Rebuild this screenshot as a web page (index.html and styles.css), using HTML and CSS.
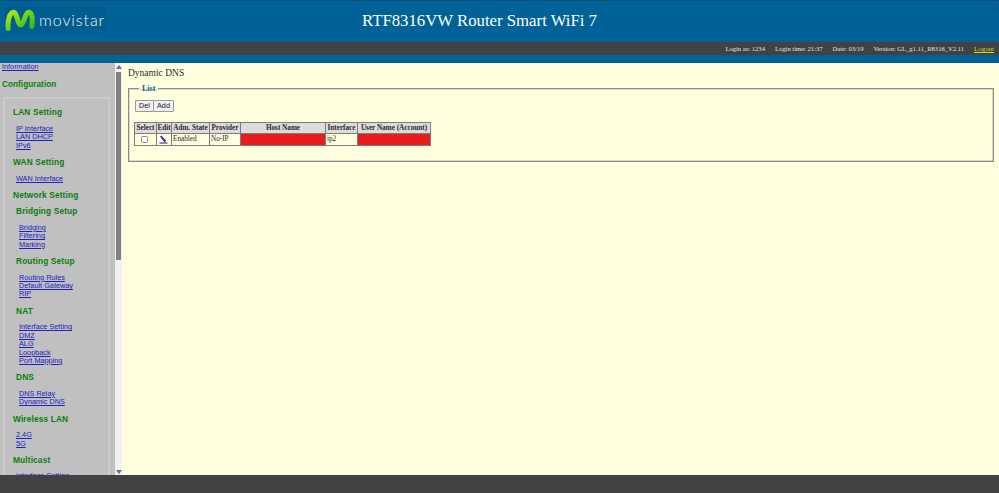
FILE: index.html
```html
<!DOCTYPE html>
<html lang="en">
<head>
<meta charset="utf-8">
<title>RTF8316VW Router Smart WiFi 7</title>
<link rel="stylesheet" href="styles.css">
</head>
<body>
<div class="page">
  <header class="banner">
    <div class="logo">
      <svg class="logo-mark" width="30" height="22" viewBox="0 0 30 22" aria-hidden="true">
        <defs>
          <linearGradient id="mv" x1="0" y1="0" x2="1" y2="1">
            <stop offset="0" stop-color="#b4e61c"/>
            <stop offset=".55" stop-color="#62d01a"/>
            <stop offset="1" stop-color="#2fb81c"/>
          </linearGradient>
        </defs>
        <path d="M3.200 19.500C2.400 11 4.800 3.200 8.600 3.200C12 3.200 12.800 16 15.800 16C19 16 20 3.200 24 3.200C27.200 3.200 28 10.500 26.800 17.500" fill="none" stroke="url(#mv)" stroke-width="5" stroke-linecap="round"/>
      </svg>
      <span class="logo-word">movistar</span>
    </div>
    <h1 class="title">RTF8316VW Router Smart WiFi 7</h1>
  </header>
  <div class="status">
    <span>Login as: 1234</span>
    <span>Login time: 21:37</span>
    <span>Date: 03/19</span>
    <span>Version: GL_g1.11_R8316_V2.11</span>
    <a href="#" class="logout">Logout</a>
  </div>
  <div class="stripe"></div>
  <div class="main">
    <nav class="side">
      <div class="side-scroll">
        <a href="#" class="info">Information</a>
        <h2 class="cfg">Configuration</h2>
        <div class="menu">
          <h3>LAN Setting</h3>
          <div class="links l1"><a href="#">IP Interface</a><a href="#">LAN DHCP</a><a href="#">IPv6</a></div>
          <h3>WAN Setting</h3>
          <div class="links l1"><a href="#">WAN Interface</a></div>
          <h3>Network Setting</h3>
          <h4>Bridging Setup</h4>
          <div class="links l2"><a href="#">Bridging</a><a href="#">Filtering</a><a href="#">Marking</a></div>
          <h4>Routing Setup</h4>
          <div class="links l2"><a href="#">Routing Rules</a><a href="#">Default Gateway</a><a href="#">RIP</a></div>
          <h4>NAT</h4>
          <div class="links l2"><a href="#">Interface Setting</a><a href="#">DMZ</a><a href="#">ALG</a><a href="#">Loopback</a><a href="#">Port Mapping</a></div>
          <h4>DNS</h4>
          <div class="links l2"><a href="#">DNS Relay</a><a href="#">Dynamic DNS</a></div>
          <h3>Wireless LAN</h3>
          <div class="links l1"><a href="#">2.4G</a><a href="#">5G</a></div>
          <h3>Multicast</h3>
          <div class="links l1"><a href="#">Interface Setting</a></div>
        </div>
      </div>
      <div class="scrollbar">
        <span class="arrow up"></span>
        <span class="thumb"></span>
        <span class="arrow down"></span>
      </div>
    </nav>
    <main class="content">
      <div class="page-title">Dynamic DNS</div>
      <fieldset class="box">
        <legend>List</legend>
        <div class="btns"><button type="button">Del</button><button type="button">Add</button></div>
        <table class="grid">
          <colgroup>
            <col class="c-sel"><col class="c-edit"><col class="c-adm"><col class="c-prov"><col class="c-host"><col class="c-if"><col class="c-user">
          </colgroup>
          <thead>
            <tr><th>Select</th><th>Edit</th><th>Adm. State</th><th>Provider</th><th>Host Name</th><th>Interface</th><th>User Name (Account)</th></tr>
          </thead>
          <tbody>
            <tr>
              <td class="mid"><span class="check"></span></td>
              <td class="mid">
                <svg class="edit" width="9" height="9" viewBox="0 0 9 9" aria-hidden="true">
                  <path d="M1 1.500L2.500 .8L7 5.500L6.500 7L5 6.700Z" fill="#3b2a9a"/>
                  <path d="M.5 8H8.500" stroke="#5a28b0" stroke-width="1.200"/>
                </svg>
              </td>
              <td>Enabled</td>
              <td>No-IP</td>
              <td class="red"></td>
              <td>ip2</td>
              <td class="red"></td>
            </tr>
          </tbody>
        </table>
      </fieldset>
    </main>
  </div>
  <footer class="foot"></footer>
</div>
</body>
</html>
```
FILE: styles.css
```css
* { box-sizing: border-box; }
html, body { margin: 0; height: 100%; overflow: hidden; }
body { font-family: "Liberation Serif", serif; color: #2a2a2a; }

.page { display: flex; flex-direction: column; height: 493px; width: 999px; }

.banner {
  height: 42px;
  background: #006296;
  border-top: 1px solid #0a4f78;
  display: flex;
  align-items: center;
  padding-left: 5px;
}
.logo { width: 100px; height: 28px; display: flex; align-items: center; gap: 4px; margin-top: -3px; background: #005d8f; flex: none; }
.logo-mark { flex: none; }
.logo-word { font-family: "Lato", sans-serif; font-size: 16px; font-weight: 300; color: #f2f6f8; letter-spacing: .9px; line-height: 1; }
.title {
  margin: 0 0 0 257px;
  font-size: 16.750px;
  font-weight: 400;
  color: #fff;
  line-height: 1;
}

.status {
  height: 13px;
  background: #404243;
  color: #e4e4e4;
  font-size: 6.600px;
  font-weight: 400;
  display: flex;
  align-items: center;
  justify-content: flex-end;
  gap: 10px;
  padding-right: 5px;
}
.logout { color: #d8d818; font-size: 6.900px; }

.stripe { height: 8px; background: #006296; }

.main { flex: 1; min-height: 0; display: flex; }

.side { width: 122px; background: #c0c0c0; display: flex; overflow: hidden; font-family: "Liberation Sans", sans-serif; }
.side-scroll { width: 115px; flex: none; overflow: hidden; font-size: 7.300px; line-height: 8.400px; }
.side a { color: #2020c0; }
.info { display: block; padding-left: 2px; }
.cfg { margin: 9.500px 0 0; padding-left: 2px; font-size: 8.200px; line-height: 8.400px; color: #0b7d0b; letter-spacing: .05px; }
.menu {
  margin: 8px 5px 0 3px;
  padding: 1px 0 0 8px;
  border: 2px solid #cbcbcb;
  border-bottom: 0;
}
.menu h3, .menu h4 { font-size: 8.300px; line-height: 8.400px; color: #0b7d0b; margin: 8.050px 0; letter-spacing: .15px; }
.menu h4 { padding-left: 3px; }
.links { display: flex; flex-direction: column; align-items: flex-start; margin: 8.050px 0; }
.l1 { padding-left: 3px; }
.l2 { padding-left: 6px; }

.scrollbar { width: 7px; flex: none; background: #f1f1f1; display: flex; flex-direction: column; align-items: center; padding: 2px 0 1px; }
.thumb { width: 5px; height: 188px; background: #808080; margin-top: 3px; }
.arrow { width: 0; height: 0; border-left: 3px solid transparent; border-right: 3px solid transparent; }
.up { border-bottom: 4px solid #6e6e6e; }
.down { border-top: 4px solid #6e6e6e; margin-top: auto; }

.content { flex: 1; min-width: 0; background: #ffffe0; padding: 5px 5px 0 6px; }
.page-title { font-size: 9.500px; line-height: 11px; padding-bottom: 5px; }

.box {
  margin: 0;
  padding: 7px 6px 15px;
  height: 78px;
  border: 1px solid #8c8c8c;
  box-shadow: inset 0 0 0 .5px #b5b5b5;
}
.box legend { color: #006296; font-weight: 700; font-size: 8px; line-height: 9px; padding: 0 3px; margin-left: 4px; }

.btns { display: flex; height: 12px; }
.btns button {
  font-family: "Liberation Sans", sans-serif;
  font-size: 7.300px;
  line-height: 1;
  padding: 0;
  height: 12px;
  background: #f1f1f1;
  border: 1px solid #9a9a9a;
  border-radius: 1px;
  color: #222;
}
.btns button:first-child { width: 19px; }
.btns button:last-child { width: 21px; margin-left: -1px; }

.grid {
  margin: 10px 0 0 -1px;
  width: 296px;
  table-layout: fixed;
  border-collapse: collapse;
  font-size: 7.200px;
  line-height: 9px;
}
.c-sel { width: 22px; } .c-edit { width: 15px; } .c-adm { width: 38px; } .c-prov { width: 31px; }
.c-host { width: 85px; } .c-if { width: 32px; } .c-user { width: 73px; }
.grid th, .grid td { border: 1px solid #7c7c7c; padding: 0 1px; white-space: nowrap; overflow: hidden; }
.grid th { height: 11px; padding: 0; background: #dcdcdc; font-weight: 700; text-align: center; }
.grid td { height: 12px; }
.grid .mid { text-align: center; line-height: 0; }
.grid .red { background: #e81c1c; }
.check { display: inline-block; width: 7px; height: 7px; background: #fff; border: 1px solid #8a8a8a; border-radius: 1.500px; margin-right: 2px; }
.edit { display: inline-block; vertical-align: middle; margin-right: 2px; }

.foot { height: 18px; background: #404243; }
```
